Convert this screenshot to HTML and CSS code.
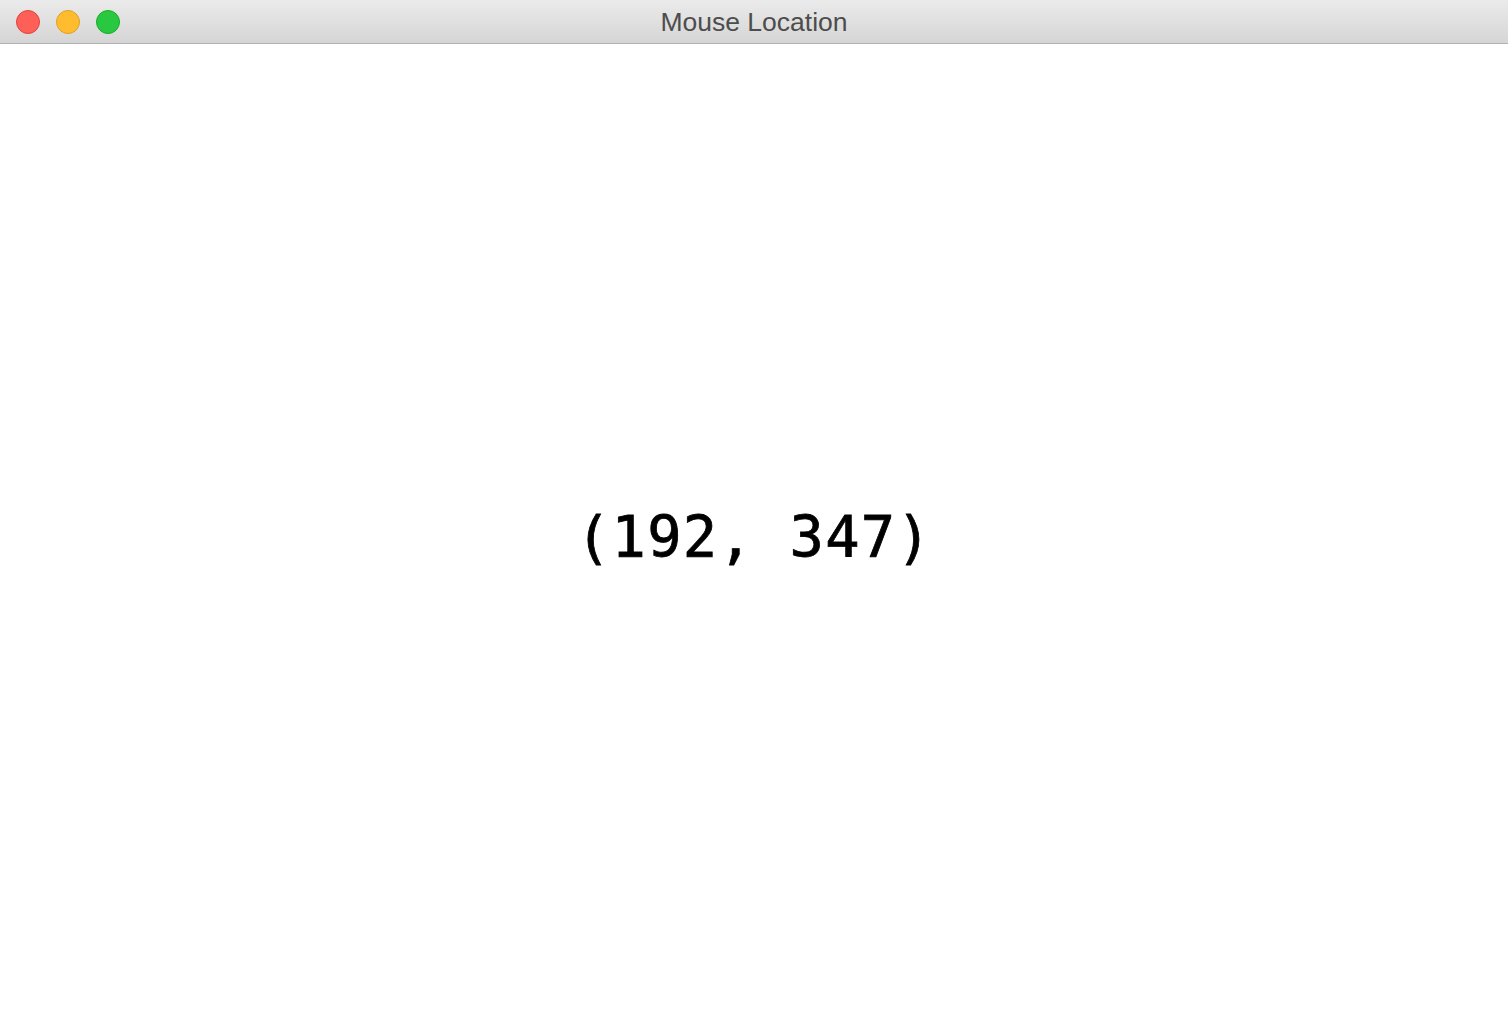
FILE: index.html
```html
<!DOCTYPE html>
<html>
<head>
<meta charset="utf-8">
<link rel="stylesheet" href="styles.css">
</head>
<body>
<div class="window">
  <div class="titlebar">
    <div class="lights">
      <span class="light close"></span>
      <span class="light min"></span>
      <span class="light max"></span>
    </div>
    <div class="title">Mouse Location</div>
  </div>
  <div class="content">
    <div class="coords">(192, 347)</div>
  </div>
</div>
</body>
</html>
```
FILE: styles.css
```css
html, body {
  margin: 0;
  padding: 0;
  height: 100%;
  background: #ffffff;
}
.window {
  display: flex;
  flex-direction: column;
  height: 100%;
}
.titlebar {
  position: relative;
  height: 43px;
  flex: 0 0 43px;
  background: linear-gradient(#ebebeb, #d5d5d5);
  border-bottom: 1px solid #b1b1b1;
  display: flex;
  align-items: center;
  justify-content: center;
}
.lights {
  position: absolute;
  left: 16px;
  top: 10px;
  display: flex;
  gap: 16px;
}
.light {
  width: 24px;
  height: 24px;
  border-radius: 50%;
  box-sizing: border-box;
}
.close { background: #fe5f57; border: 1px solid #e0443e; }
.min { background: #febc2e; border: 1px solid #dea123; }
.max { background: #28c840; border: 1px solid #1aab29; }
.title {
  font-family: "Liberation Sans", Arial, sans-serif;
  font-size: 26.5px;
  color: #4d4d4d;
  margin-top: 2px;
}
.content {
  flex: 1;
  display: flex;
  align-items: center;
  justify-content: center;
}
.coords {
  font-family: "DejaVu Sans Mono", monospace;
  font-weight: normal;
  font-size: 57px;
  letter-spacing: 1.3px;
  color: #000;
  -webkit-text-stroke: 0.8px #000;
  margin-top: 2px;
}
```
